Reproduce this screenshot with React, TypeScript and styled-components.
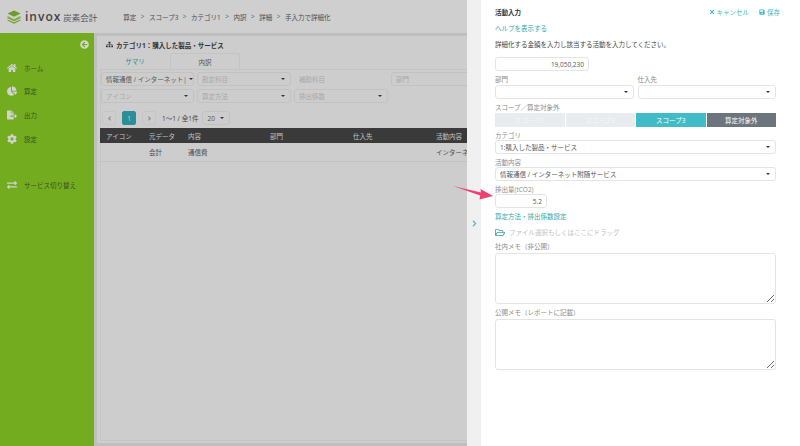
import React from 'react';
import styled, { createGlobalStyle } from 'styled-components';
import {
    FaHome, FaChartPie, FaFileExport, FaCog, FaExchangeAlt, FaArrowCircleLeft,
    FaSitemap, FaTimes, FaSave, FaRegFolderOpen, FaChevronRight, FaAngleLeft, FaAngleRight,
} from 'react-icons/fa';

const GlobalStyle = createGlobalStyle`
    html, body { margin: 0; padding: 0; }
    body {
        width: 800px;
        height: 446px;
        overflow: hidden;
        font-family: "Open Sans", "Noto Sans CJK JP", sans-serif;
        font-size: 6.5px;
        color: #444;
    }
    * { box-sizing: border-box; }
`;

const teal = '#3fb8c2';

const Page = styled.div`
    display: flex;
    width: 800px;
    height: 446px;
    position: relative;
`;

const Main = styled.div`
    width: 467px;
    flex: none;
    display: flex;
    flex-direction: column;
    background: #bfbfbf;
    overflow: hidden;
`;

const Header = styled.header`
    height: 33px;
    flex: none;
    display: flex;
    align-items: center;
    background: #cfcfcf;
    padding-left: 7px;
`;

const LogoWord = styled.span`
    margin-left: 4px;
    font-family: "Open Sans", sans-serif;
    font-size: 12px;
    font-weight: 600;
    letter-spacing: 1px;
    color: #444;
`;

const LogoSub = styled.span`
    margin-left: 2px;
    font-size: 8.5px;
    color: #555;
    width: 40px;
    flex: none;
    white-space: nowrap;
`;

const Crumbs = styled.nav`
    margin-left: 20px;
    display: flex;
    gap: 4.5px;
    color: #4c4c4c;
    white-space: nowrap;
    span { color: #5c5c5c; }
`;

const Body = styled.div`
    flex: 1;
    display: flex;
    min-height: 0;
`;

const Sidebar = styled.aside`
    width: 94px;
    flex: none;
    background: #73ad1f;
    padding-top: 7px;
    display: flex;
    flex-direction: column;
`;

const Collapse = styled.div`
    display: flex;
    justify-content: flex-end;
    padding-right: 5px;
    color: #d4d4d4;
    font-size: 9px;
    height: 9px;
    margin-bottom: 7px;
`;

const NavItem = styled.div<{ $gap?: number }>`
    height: 23.6px;
    margin-top: ${p => p.$gap ?? 0}px;
    display: flex;
    align-items: center;
    padding-left: 7px;
    gap: 7px;
    color: #3c4d22;
    white-space: nowrap;
    svg { width: 10px; height: 10px; color: #d2d2d2; }
`;

const Content = styled.main`
    flex: 1;
    min-width: 0;
    margin: 3px 0 3px 3px;
    padding-left: 3px;
    display: flex;
    flex-direction: column;
    background: #cdcdcd;
`;

const CardTitle = styled.div`
    height: 17px;
    flex: none;
    display: flex;
    align-items: center;
    gap: 3px;
    padding-left: 6px;
    font-weight: 700;
    color: #333;
    svg { width: 7px; height: 7px; }
`;

const Tabs = styled.div`
    display: flex;
    height: 17px;
    flex: none;
    border-bottom: 1px solid #c4c4c4;
`;

const Tab = styled.div<{ $active?: boolean }>`
    width: 70px;
    display: flex;
    align-items: center;
    justify-content: center;
    color: ${p => (p.$active ? '#555' : '#2c8d95')};
    border: ${p => (p.$active ? '1px solid #c4c4c4' : '0')};
    border-bottom: 0;
    border-radius: 2px 2px 0 0;
`;

const TabBody = styled.div`
    flex: 1;
    margin-bottom: 2px;
    border-left: 1px solid #c5c5c5;
    border-bottom: 1px solid #c5c5c5;
`;

const FilterGrid = styled.div`
    display: grid;
    grid-template-columns: 93px 94px 94px 94px;
    column-gap: 3px;
    row-gap: 3px;
    margin-top: 2px;
    width: 400px;
`;

const Select = styled.div<{ $dim?: boolean; $plain?: boolean }>`
    height: 14px;
    display: flex;
    align-items: center;
    justify-content: space-between;
    padding: 0 5px 0 4px;
    border: 1px solid ${p => (p.$plain ? 'transparent' : '#c2c2c2')};
    border-radius: 3px;
    white-space: nowrap;
    overflow: hidden;
    color: ${p => (p.$dim ? '#a8a8a8' : '#555')};
`;

const Caret = styled.i`
    flex: none;
    margin-left: 2px;
    border-left: 2px solid transparent;
    border-right: 2px solid transparent;
    border-top: 2px solid #333;
`;

const Pager = styled.div`
    display: flex;
    align-items: center;
    height: 14px;
    margin: 8px 0 3px 1px;
    color: #444;
    white-space: nowrap;
`;

const PageButton = styled.div<{ $active?: boolean }>`
    width: 14px;
    height: 14px;
    margin-right: 6px;
    border-radius: 2px;
    display: flex;
    align-items: center;
    justify-content: center;
    color: ${p => (p.$active ? '#cfcfcf' : '#8a8a8a')};
    background: ${p => (p.$active ? '#2a8f98' : 'transparent')};
    border: 1px solid ${p => (p.$active ? '#2a8f98' : '#c6c6c6')};
    svg { width: 7px; height: 7px; }
`;

const PageSize = styled(Select)`
    width: 28px;
    margin-left: 4px;
`;

const Row = styled.div<{ $head?: boolean }>`
    display: grid;
    grid-template-columns: 44px 44px 82px 83px 83px 31px;
    height: ${p => (p.$head ? 15 : 19)}px;
    width: 367px;
    margin-left: -1px;
    align-items: center;
    white-space: nowrap;
    color: ${p => (p.$head ? '#c4c4c4' : '#484848')};
    background: ${p => (p.$head ? '#3a3a3a' : 'transparent')};
    border-bottom: ${p => (p.$head ? '0' : '1px solid #c2c2c2')};
`;

const Cell = styled.div<{ $indent?: number }>`
    padding-left: ${p => p.$indent ?? 0}px;
    overflow: hidden;
`;

const Handle = styled.div`
    width: 14px;
    flex: none;
    background: #f0f0f0;
    display: flex;
    align-items: center;
    justify-content: center;
    color: ${teal};
    svg { width: 5px; height: 7px; }
`;

const Panel = styled.section`
    flex: 1;
    background: #fff;
    padding: 7px 24px 0 14px;
    display: flex;
    flex-direction: column;
`;

const PanelHead = styled.div`
    display: flex;
    justify-content: space-between;
    align-items: center;
    height: 10px;
    margin-right: -4px;
`;

const PanelTitle = styled.div`
    font-weight: 700;
    color: #333;
`;

const Actions = styled.div`
    display: flex;
    gap: 10px;
`;

const Action = styled.span`
    display: flex;
    align-items: center;
    gap: 2px;
    color: ${teal};
    svg { width: 6px; height: 6px; }
`;

const LinkText = styled.div<{ $top: number }>`
    margin-top: ${p => p.$top}px;
    height: 10px;
    line-height: 10px;
    color: #2fa9a9;
`;

const Description = styled.div`
    margin-top: 6px;
    height: 10px;
    line-height: 10px;
    color: #444;
`;

const NumberBox = styled.div<{ $width: number; $top?: number }>`
    width: ${p => p.$width}px;
    height: 14px;
    margin-top: ${p => p.$top ?? 0}px;
    display: flex;
    align-items: center;
    justify-content: flex-end;
    padding-right: 4px;
    border: 1px solid #e4e4e4;
    border-radius: 3px;
    color: #555;
`;

const Label = styled.div<{ $top?: number; $height?: number }>`
    margin-top: ${p => p.$top ?? 4}px;
    height: ${p => p.$height ?? 9}px;
    line-height: 9px;
    color: #8a8a8a;
`;

const TwoCols = styled.div`
    display: grid;
    grid-template-columns: 1fr 1fr;
    column-gap: 4px;
`;

const Scopes = styled.div`
    display: grid;
    grid-template-columns: repeat(4, 1fr);
    column-gap: 1px;
    height: 14px;
`;

const Scope = styled.div<{ $kind: 'off' | 'on' | 'out' }>`
    display: flex;
    align-items: center;
    justify-content: center;
    color: ${p => (p.$kind === 'off' ? '#f5f6f7' : '#fff')};
    background: ${p => (p.$kind === 'off' ? '#e9ecef' : p.$kind === 'on' ? '#41bcc6' : '#6c757d')};
`;

const FieldSelect = styled(Select)`
    border-color: #e4e4e4;
`;

const FileRow = styled.div`
    margin-top: 5px;
    height: 10px;
    display: flex;
    align-items: center;
    gap: 4px;
    color: #c0c0c0;
    svg { width: 10px; height: 9px; color: #3a9aa2; }
`;

const Memo = styled.textarea<{ $height: number }>`
    display: block;
    flex: none;
    width: 100%;
    height: ${p => p.$height}px;
    border: 1px solid #e4e4e4;
    border-radius: 3px;
    outline: 0;
    background: #fff;
`;

const Pointer = styled.svg`
    position: absolute;
    left: 450px;
    top: 182px;
    width: 48px;
    height: 20px;
`;

const LogoMark = () => (
    <svg width="14" height="14" viewBox="0 0 14 14">
        <path d="M7 0.5 13.5 3.6 7 6.8 0.5 3.6Z" fill="#6d9c2a" />
        <path d="M0.5 6 7 9.2 13.5 6V8.2L7 11.4 0.5 8.2Z" fill="#7fae3d" />
        <path d="M0.5 9.4 7 12.6 13.5 9.4V10.6L7 13.8 0.5 10.6Z" fill="#6d9c2a" />
    </svg>
);

const crumbs = ['算定', 'スコープ3', 'カテゴリ1', '内訳', '詳細', '手入力で詳細化'];

const nav = [
    { icon: <FaHome />, label: 'ホーム' },
    { icon: <FaChartPie />, label: '算定' },
    { icon: <FaFileExport />, label: '出力' },
    { icon: <FaCog />, label: '設定' },
];

const filters = [
    { text: '情報通信 / インターネット|', dim: false, caret: true },
    { text: '勘定科目', dim: true, caret: true },
    { text: '補助科目', dim: true, caret: false, plain: true },
    { text: '部門', dim: true, caret: false },
    { text: 'アイコン', dim: true, caret: true },
    { text: '算定方法', dim: true, caret: true },
    { text: '排出係数', dim: true, caret: true },
];

const App = () => {
    return (
        <Page>
            <GlobalStyle />
            <Main>
                <Header>
                    <LogoMark />
                    <LogoWord>invox</LogoWord>
                    <LogoSub>炭素会計</LogoSub>
                    <Crumbs>
                        {crumbs.map((crumb, index) => (
                            <React.Fragment key={crumb}>
                                {index > 0 && <span>&gt;</span>}
                                {crumb}
                            </React.Fragment>
                        ))}
                    </Crumbs>
                </Header>
                <Body>
                    <Sidebar>
                        <Collapse><FaArrowCircleLeft /></Collapse>
                        {nav.map(item => (
                            <NavItem key={item.label}>{item.icon}{item.label}</NavItem>
                        ))}
                        <NavItem $gap={23}><FaExchangeAlt />サービス切り替え</NavItem>
                    </Sidebar>
                    <Content>
                        <CardTitle><FaSitemap />カテゴリ1：購入した製品・サービス</CardTitle>
                        <Tabs>
                            <Tab>サマリ</Tab>
                            <Tab $active>内訳</Tab>
                        </Tabs>
                        <TabBody>
                            <FilterGrid>
                                {filters.map(filter => (
                                    <Select key={filter.text} $dim={filter.dim} $plain={filter.plain}>
                                        {filter.text}
                                        {filter.caret && <Caret />}
                                    </Select>
                                ))}
                            </FilterGrid>
                            <Pager>
                                <PageButton><FaAngleLeft /></PageButton>
                                <PageButton $active>1</PageButton>
                                <PageButton><FaAngleRight /></PageButton>
                                1〜1 / 全1件
                                <PageSize>20<Caret /></PageSize>
                            </Pager>
                            <Row $head>
                                <Cell $indent={6}>アイコン</Cell>
                                <Cell $indent={5}>元データ</Cell>
                                <Cell>内容</Cell>
                                <Cell>部門</Cell>
                                <Cell>仕入先</Cell>
                                <Cell>活動内容</Cell>
                            </Row>
                            <Row>
                                <Cell />
                                <Cell $indent={5}>会計</Cell>
                                <Cell>通信費</Cell>
                                <Cell />
                                <Cell />
                                <Cell>インターネ</Cell>
                            </Row>
                        </TabBody>
                    </Content>
                </Body>
            </Main>
            <Handle><FaChevronRight /></Handle>
            <Panel>
                <PanelHead>
                    <PanelTitle>活動入力</PanelTitle>
                    <Actions>
                        <Action><FaTimes />キャンセル</Action>
                        <Action><FaSave />保存</Action>
                    </Actions>
                </PanelHead>
                <LinkText $top={7}>ヘルプを表示する</LinkText>
                <Description>詳細化する金額を入力し該当する活動を入力してください。</Description>
                <NumberBox $width={94} $top={7}>19,050,230</NumberBox>
                <TwoCols>
                    <div>
                        <Label $height={10}>部門</Label>
                        <FieldSelect><span /><Caret /></FieldSelect>
                    </div>
                    <div>
                        <Label $height={10}>仕入先</Label>
                        <FieldSelect><span /><Caret /></FieldSelect>
                    </div>
                </TwoCols>
                <Label $height={10}>スコープ／算定対象外</Label>
                <Scopes>
                    <Scope $kind="off">スコープ1</Scope>
                    <Scope $kind="off">スコープ2</Scope>
                    <Scope $kind="on">スコープ3</Scope>
                    <Scope $kind="out">算定対象外</Scope>
                </Scopes>
                <Label>カテゴリ</Label>
                <FieldSelect>1:購入した製品・サービス<Caret /></FieldSelect>
                <Label>活動内容</Label>
                <FieldSelect>情報通信 / インターネット附随サービス<Caret /></FieldSelect>
                <Label>排出量(tCO2)</Label>
                <NumberBox $width={52}>5.2</NumberBox>
                <LinkText $top={4}>算定方法・排出係数設定</LinkText>
                <FileRow><FaRegFolderOpen />ファイル選択もしくはここにドラッグ</FileRow>
                <Label $top={5} $height={11}>社内メモ（非公開）</Label>
                <Memo $height={51} readOnly />
                <Label $height={11}>公開メモ（レポートに記載）</Label>
                <Memo $height={51} readOnly />
            </Panel>
            <Pointer viewBox="0 0 48 20">
                <path d="M3 4 31 10.5 30.5 7 43 14 29.5 17.5 30.2 13.5Z" fill="#ee3f73" />
            </Pointer>
        </Page>
    );
};

export default App;
